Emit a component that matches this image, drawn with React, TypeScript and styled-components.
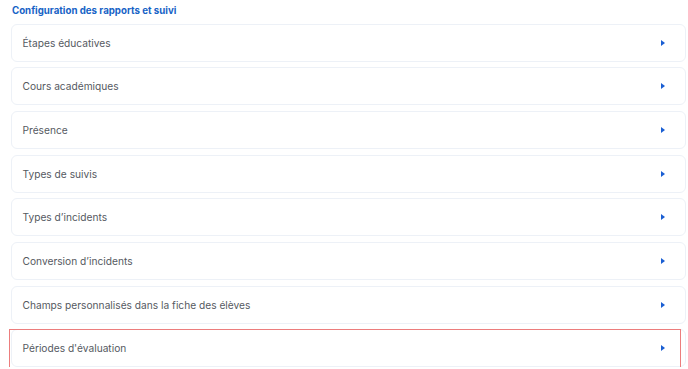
import styled, { createGlobalStyle } from "styled-components";

const GlobalStyle = createGlobalStyle`
  html, body {
    margin: 0;
    padding: 0;
    background: #ffffff;
    font-family: Inter, "Noto Sans", sans-serif;
  }
`;

const Page = styled.div`
  padding: 4px 2px 0 11px;
  display: flex;
  flex-direction: column;
`;

const Title = styled.h2`
  margin: 0 0 5.5px 1px;
  font-size: 9.7px;
  font-weight: 700;
  color: #1763c6;
  line-height: 14px;
`;

const List = styled.div`
  display: flex;
  flex-direction: column;
  gap: 5.7px;
`;

const Row = styled.div`
  position: relative;
  height: 38px;
  box-sizing: border-box;
  border: 1px solid #edf1f7;
  border-radius: 6px;
  background: #fff;
  display: flex;
  align-items: center;
  justify-content: space-between;
  padding: 0 20px 0 10.5px;
`;

const Label = styled.span`
  font-size: 10.2px;
  color: #55595f;
`;

const Arrow = styled.span`
  width: 0;
  height: 0;
  border-top: 3px solid transparent;
  border-bottom: 3px solid transparent;
  border-left: 4px solid #1a5fd3;
`;

const Highlight = styled.div`
  position: absolute;
  left: -3px;
  right: 4px;
  top: -1px;
  bottom: -2px;
  border: 1.5px solid #ec7d7d;
  pointer-events: none;
`;

const items = [
  "Étapes éducatives",
  "Cours académiques",
  "Présence",
  "Types de suivis",
  "Types d’incidents",
  "Conversion d’incidents",
  "Champs personnalisés dans la fiche des élèves",
  "Périodes d'évaluation",
];

export default function App() {
  return (
    <>
      <GlobalStyle />
      <Page>
        <Title>Configuration des rapports et suivi</Title>
        <List>
          {items.map((item, i) => (
            <Row key={item}>
              <Label>{item}</Label>
              <Arrow />
              {i === items.length - 1 && <Highlight />}
            </Row>
          ))}
        </List>
      </Page>
    </>
  );
}
